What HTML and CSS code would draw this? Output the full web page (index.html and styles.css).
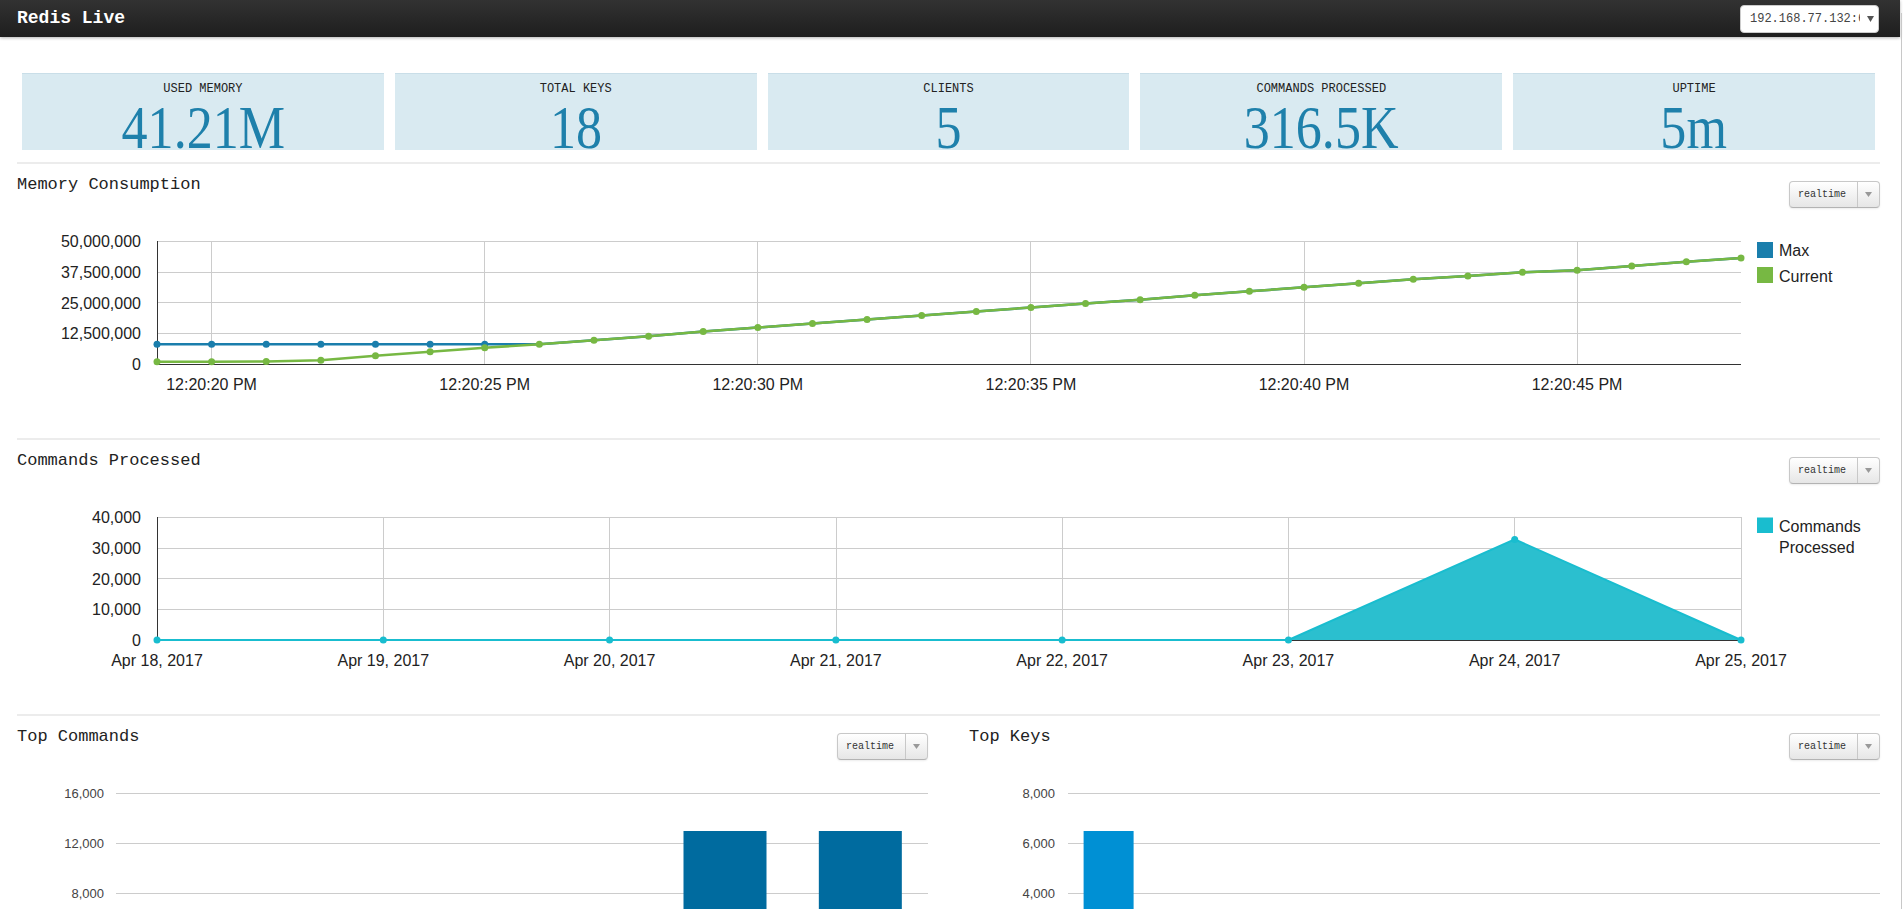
FILE: index.html
```html
<!DOCTYPE html>
<html lang="en">
<head>
<meta charset="utf-8">
<title>Redis Live</title>
<link rel="stylesheet" href="styles.css">
</head>
<body>
<div class="page">
  <header class="navbar">
    <div class="brand">Redis Live</div>
    <div class="server-select">
      <span class="server-text">192.168.77.132:6379</span>
      <svg class="select-caret" width="7" height="6" viewBox="0 0 7 6"><path d="M0 0H7L3.5 6Z"/></svg>
    </div>
  </header>

  <main class="container">
    <div class="stats">
      <div class="stat"><div class="stat-label">USED MEMORY</div><div class="stat-value"><span>41.21M</span></div></div>
      <div class="stat"><div class="stat-label">TOTAL KEYS</div><div class="stat-value"><span>18</span></div></div>
      <div class="stat"><div class="stat-label">CLIENTS</div><div class="stat-value"><span>5</span></div></div>
      <div class="stat"><div class="stat-label">COMMANDS PROCESSED</div><div class="stat-value"><span>316.5K</span></div></div>
      <div class="stat"><div class="stat-label">UPTIME</div><div class="stat-value"><span>5m</span></div></div>
    </div>

    <section class="panel">
      <div class="panel-head">
        <h2 class="panel-title">Memory Consumption</h2>
        <div class="btn-group"><span class="btn">realtime</span><span class="btn-caret"><svg width="7" height="5" viewBox="0 0 7 5"><path d="M0 0H7L3.5 5Z"/></svg></span></div>
      </div>
      <svg class="chart" width="1863" height="230" viewBox="0 0 1863 230">
        <g class="grid">
          <line x1="140" y1="33.5" x2="1724" y2="33.5"/>
          <line x1="140" y1="64.5" x2="1724" y2="64.5"/>
          <line x1="140" y1="94.5" x2="1724" y2="94.5"/>
          <line x1="140" y1="125.5" x2="1724" y2="125.5"/>
          <line x1="194.5" y1="33" x2="194.5" y2="156"/>
          <line x1="467.5" y1="33" x2="467.5" y2="156"/>
          <line x1="740.5" y1="33" x2="740.5" y2="156"/>
          <line x1="1013.5" y1="33" x2="1013.5" y2="156"/>
          <line x1="1287.5" y1="33" x2="1287.5" y2="156"/>
          <line x1="1560.5" y1="33" x2="1560.5" y2="156"/>
        </g>
        <g class="axis-line">
          <line x1="140.5" y1="33" x2="140.5" y2="157"/>
          <line x1="140" y1="156.5" x2="1724" y2="156.5"/>
        </g>
        <g class="axis-label y-labels">
          <text x="124" y="39">50,000,000</text>
          <text x="124" y="70">37,500,000</text>
          <text x="124" y="100.5">25,000,000</text>
          <text x="124" y="131">12,500,000</text>
          <text x="124" y="162">0</text>
        </g>
        <g class="axis-label x-labels">
          <text x="194.6" y="182">12:20:20 PM</text>
          <text x="467.7" y="182">12:20:25 PM</text>
          <text x="740.8" y="182">12:20:30 PM</text>
          <text x="1013.9" y="182">12:20:35 PM</text>
          <text x="1287" y="182">12:20:40 PM</text>
          <text x="1560.1" y="182">12:20:45 PM</text>
        </g>
        <polyline class="line-max" points="140,136.3 194.62,136.3 249.24,136.3 303.86,136.3 358.48,136.3 413.1,136.3 467.72,136.3 522.34,136.3 576.96,132.3 631.58,128.3 686.2,123.5 740.82,119.5 795.44,115.4 850.06,111.5 904.68,107.5 959.3,103.5 1013.92,99.5 1068.54,95.5 1123.16,91.7 1177.78,87.3 1232.4,83.3 1287.02,79.3 1341.64,75.3 1396.26,71.3 1450.88,68 1505.5,64.3 1560.12,62.3 1614.74,58 1669.36,53.7 1724,50"/>
        <g class="dots-max">
          <circle cx="140" cy="136.3" r="3.5"/><circle cx="194.62" cy="136.3" r="3.5"/><circle cx="249.24" cy="136.3" r="3.5"/><circle cx="303.86" cy="136.3" r="3.5"/><circle cx="358.48" cy="136.3" r="3.5"/><circle cx="413.1" cy="136.3" r="3.5"/><circle cx="467.72" cy="136.3" r="3.5"/>
        </g>
        <polyline class="line-cur" points="140,153.7 194.62,153.7 249.24,153.5 303.86,152.3 358.48,147.7 413.1,143.7 467.72,139.7 522.34,136.3 576.96,132.3 631.58,128.3 686.2,123.5 740.82,119.5 795.44,115.4 850.06,111.5 904.68,107.5 959.3,103.5 1013.92,99.5 1068.54,95.5 1123.16,91.7 1177.78,87.3 1232.4,83.3 1287.02,79.3 1341.64,75.3 1396.26,71.3 1450.88,68 1505.5,64.3 1560.12,62.3 1614.74,58 1669.36,53.7 1724,50"/>
        <g class="dots-cur">
          <circle cx="140" cy="153.7" r="3.5"/><circle cx="194.62" cy="153.7" r="3.5"/><circle cx="249.24" cy="153.5" r="3.5"/><circle cx="303.86" cy="152.3" r="3.5"/><circle cx="358.48" cy="147.7" r="3.5"/><circle cx="413.1" cy="143.7" r="3.5"/><circle cx="467.72" cy="139.7" r="3.5"/><circle cx="522.34" cy="136.3" r="3.5"/><circle cx="576.96" cy="132.3" r="3.5"/><circle cx="631.58" cy="128.3" r="3.5"/><circle cx="686.2" cy="123.5" r="3.5"/><circle cx="740.82" cy="119.5" r="3.5"/><circle cx="795.44" cy="115.4" r="3.5"/><circle cx="850.06" cy="111.5" r="3.5"/><circle cx="904.68" cy="107.5" r="3.5"/><circle cx="959.3" cy="103.5" r="3.5"/><circle cx="1013.92" cy="99.5" r="3.5"/><circle cx="1068.54" cy="95.5" r="3.5"/><circle cx="1123.16" cy="91.7" r="3.5"/><circle cx="1177.78" cy="87.3" r="3.5"/><circle cx="1232.4" cy="83.3" r="3.5"/><circle cx="1287.02" cy="79.3" r="3.5"/><circle cx="1341.64" cy="75.3" r="3.5"/><circle cx="1396.26" cy="71.3" r="3.5"/><circle cx="1450.88" cy="68" r="3.5"/><circle cx="1505.5" cy="64.3" r="3.5"/><circle cx="1560.12" cy="62.3" r="3.5"/><circle cx="1614.74" cy="58" r="3.5"/><circle cx="1669.36" cy="53.7" r="3.5"/><circle cx="1724" cy="50" r="3.5"/>
        </g>
        <rect class="sw-max" x="1740" y="34" width="16" height="16"/>
        <text class="legend" x="1762" y="48">Max</text>
        <rect class="sw-cur" x="1740" y="59" width="16" height="16"/>
        <text class="legend" x="1762" y="74">Current</text>
      </svg>
    </section>

    <section class="panel">
      <div class="panel-head">
        <h2 class="panel-title">Commands Processed</h2>
        <div class="btn-group"><span class="btn">realtime</span><span class="btn-caret"><svg width="7" height="5" viewBox="0 0 7 5"><path d="M0 0H7L3.5 5Z"/></svg></span></div>
      </div>
      <svg class="chart" width="1863" height="230" viewBox="0 0 1863 230">
        <g class="grid">
          <line x1="140" y1="33.5" x2="1724" y2="33.5"/>
          <line x1="140" y1="64.5" x2="1724" y2="64.5"/>
          <line x1="140" y1="94.5" x2="1724" y2="94.5"/>
          <line x1="140" y1="125.5" x2="1724" y2="125.5"/>
          <line x1="366.5" y1="33" x2="366.5" y2="156"/>
          <line x1="592.5" y1="33" x2="592.5" y2="156"/>
          <line x1="819.5" y1="33" x2="819.5" y2="156"/>
          <line x1="1045.5" y1="33" x2="1045.5" y2="156"/>
          <line x1="1271.5" y1="33" x2="1271.5" y2="156"/>
          <line x1="1497.5" y1="33" x2="1497.5" y2="156"/>
          <line x1="1724.5" y1="33" x2="1724.5" y2="156"/>
        </g>
        <g class="axis-line">
          <line x1="140.5" y1="33" x2="140.5" y2="157"/>
          <line x1="140" y1="156.5" x2="1724" y2="156.5"/>
        </g>
        <g class="axis-label y-labels">
          <text x="124" y="39">40,000</text>
          <text x="124" y="70">30,000</text>
          <text x="124" y="100.5">20,000</text>
          <text x="124" y="131">10,000</text>
          <text x="124" y="162">0</text>
        </g>
        <g class="axis-label x-labels">
          <text x="140" y="182">Apr 18, 2017</text>
          <text x="366.29" y="182">Apr 19, 2017</text>
          <text x="592.57" y="182">Apr 20, 2017</text>
          <text x="818.86" y="182">Apr 21, 2017</text>
          <text x="1045.14" y="182">Apr 22, 2017</text>
          <text x="1271.43" y="182">Apr 23, 2017</text>
          <text x="1497.71" y="182">Apr 24, 2017</text>
          <text x="1724" y="182">Apr 25, 2017</text>
        </g>
        <polygon class="area-cmd" points="1271.43,156 1497.71,55.4 1724,156"/>
        <polyline class="line-cmd" points="140,156 1271.43,156 1497.71,55.4 1724,156"/>
        <g class="dots-cmd">
          <circle cx="140" cy="156" r="3.5"/><circle cx="366.29" cy="156" r="3.5"/><circle cx="592.57" cy="156" r="3.5"/><circle cx="818.86" cy="156" r="3.5"/><circle cx="1045.14" cy="156" r="3.5"/><circle cx="1271.43" cy="156" r="3.5"/><circle cx="1497.71" cy="55.4" r="3.5"/><circle cx="1724" cy="156" r="3.5"/>
        </g>
        <rect class="sw-cmd" x="1740" y="33.5" width="16" height="15.5"/>
        <text class="legend" x="1762" y="48">Commands</text>
        <text class="legend" x="1762" y="68.5">Processed</text>
      </svg>
    </section>

    <div class="split">
      <section class="panel half">
        <div class="panel-head">
          <h2 class="panel-title">Top Commands</h2>
          <div class="btn-group"><span class="btn">realtime</span><span class="btn-caret"><svg width="7" height="5" viewBox="0 0 7 5"><path d="M0 0H7L3.5 5Z"/></svg></span></div>
        </div>
        <svg class="chart" width="911" height="240" viewBox="0 0 911 240">
          <g class="grid">
            <line x1="99" y1="33.5" x2="911" y2="33.5"/>
            <line x1="99" y1="83.5" x2="911" y2="83.5"/>
            <line x1="99" y1="133.5" x2="911" y2="133.5"/>
            <line x1="99" y1="183.5" x2="911" y2="183.5"/>
          </g>
          <g class="axis-label-sm">
            <text x="87" y="38">16,000</text>
            <text x="87" y="88">12,000</text>
            <text x="87" y="138">8,000</text>
            <text x="87" y="188">4,000</text>
            <text x="87" y="238">0</text>
          </g>
          <g class="bars-cmd">
            <rect x="125.17" y="193" width="83" height="40"/>
            <rect x="260.5" y="197" width="83" height="36"/>
            <rect x="395.83" y="201" width="83" height="32"/>
            <rect x="531.17" y="206" width="83" height="27"/>
            <rect x="666.5" y="71" width="83" height="162"/>
            <rect x="801.83" y="71" width="83" height="162"/>
          </g>
          <line class="axis-line-el" x1="99" y1="233.5" x2="911" y2="233.5"/>
        </svg>
      </section>
      <section class="panel half">
        <div class="panel-head">
          <h2 class="panel-title">Top Keys</h2>
          <div class="btn-group"><span class="btn">realtime</span><span class="btn-caret"><svg width="7" height="5" viewBox="0 0 7 5"><path d="M0 0H7L3.5 5Z"/></svg></span></div>
        </div>
        <svg class="chart" width="911" height="240" viewBox="0 0 911 240">
          <g class="grid">
            <line x1="99" y1="33.5" x2="911" y2="33.5"/>
            <line x1="99" y1="83.5" x2="911" y2="83.5"/>
            <line x1="99" y1="133.5" x2="911" y2="133.5"/>
            <line x1="99" y1="183.5" x2="911" y2="183.5"/>
          </g>
          <g class="axis-label-sm">
            <text x="86" y="38">8,000</text>
            <text x="86" y="88">6,000</text>
            <text x="86" y="138">4,000</text>
            <text x="86" y="188">2,000</text>
            <text x="86" y="238">0</text>
          </g>
          <g class="bars-key">
            <rect x="114.6" y="71" width="50" height="162"/>
            <rect x="195.8" y="170" width="50" height="63"/>
            <rect x="277" y="180" width="50" height="53"/>
            <rect x="358.2" y="190" width="50" height="43"/>
            <rect x="439.4" y="200" width="50" height="33"/>
            <rect x="520.6" y="205" width="50" height="28"/>
            <rect x="601.8" y="210" width="50" height="23"/>
            <rect x="683" y="214" width="50" height="19"/>
            <rect x="764.2" y="218" width="50" height="15"/>
            <rect x="845.4" y="221" width="50" height="12"/>
          </g>
          <line class="axis-line-el" x1="99" y1="233.5" x2="911" y2="233.5"/>
        </svg>
      </section>
    </div>
  </main>
</div>
<div class="scroll-edge"></div>
</body>
</html>
```

FILE: styles.css
```css
* { box-sizing: border-box; }

html, body {
  margin: 0;
  padding: 0;
  background: #fff;
}

body {
  font-family: "Liberation Sans", Arial, sans-serif;
  color: #222;
}

.page {
  width: 1900px;
}

/* ---------- navbar ---------- */
.navbar {
  height: 37px;
  display: flex;
  justify-content: space-between;
  align-items: flex-start;
  padding: 0 21px 0 17px;
  background: linear-gradient(to bottom, #323232, #1e1e1e);
  box-shadow: 0 1px 3px rgba(0, 0, 0, 0.3);
}

.brand {
  font: bold 18px/37px "Liberation Mono", monospace;
  color: #fff;
}

.server-select {
  margin-top: 5px;
  width: 139px;
  height: 28px;
  display: flex;
  align-items: center;
  padding-left: 9px;
  background: #fff;
  border: 1px solid #ccc;
  border-radius: 4px;
}

.server-text {
  width: 110px;
  overflow: hidden;
  white-space: nowrap;
  font: 12px/26px "Liberation Mono", monospace;
  color: #444;
}

.select-caret {
  margin-left: 7px;
  fill: #555;
}

/* ---------- layout ---------- */
.container {
  width: 1863px;
  margin-left: 17px;
}

.stats {
  display: grid;
  grid-template-columns: repeat(5, 1fr);
  gap: 11px;
  padding: 0 5px;
  margin-top: 36px;
}

.stat {
  height: 77px;
  padding-top: 7.5px;
  text-align: center;
  background: #d9eaf1;
  border-top: 1px solid #c9dee8;
}

.stat-label {
  font: 12px/14px "Liberation Mono", monospace;
  color: #222;
}

.stat-value {
  margin-top: 7px;
  font: 62px/48px "Liberation Serif", serif;
  color: #1e80ab;
}

.stat-value span {
  display: inline-block;
  transform: scaleX(0.84);
}

.panel {
  border-top: 2px solid #ececec;
}

.stats + .panel {
  margin-top: 12px;
}

.panel-head {
  display: flex;
  justify-content: space-between;
  align-items: flex-start;
  height: 44px;
}

.panel-title {
  margin: 11px 0 0;
  font: normal 17px/20px "Liberation Mono", monospace;
  color: #222;
}

.btn-group {
  margin-top: 17px;
  width: 91px;
  height: 27px;
  display: flex;
  border: 1px solid #c8c8c8;
  border-bottom-color: #b3b3b3;
  border-radius: 4px;
  background: linear-gradient(to bottom, #ffffff, #e6e6e6);
  box-shadow: 0 1px 2px rgba(0, 0, 0, 0.08);
}

.btn {
  width: 67px;
  padding-left: 8px;
  font: 10px/25px "Liberation Mono", monospace;
  color: #333;
  white-space: nowrap;
}

.btn-caret {
  flex: 1;
  display: flex;
  align-items: center;
  justify-content: center;
  border-left: 1px solid #c8c8c8;
  fill: #999;
}

.chart {
  display: block;
}

.split {
  display: grid;
  grid-template-columns: 1fr 1fr;
  gap: 41px;
  border-top: 2px solid #ececec;
}

.split .panel {
  border-top: 0;
}

/* ---------- svg chart styling ---------- */
.grid line {
  stroke: #cccccc;
  stroke-width: 1;
}

.axis-line line,
.axis-line-el {
  stroke: #333333;
  stroke-width: 1;
}

.axis-label text {
  font-family: "Liberation Sans", Arial, sans-serif;
  font-size: 16px;
  fill: #222;
}

.y-labels text {
  text-anchor: end;
}

.x-labels text {
  text-anchor: middle;
}

.axis-label-sm text {
  font-family: "Liberation Sans", Arial, sans-serif;
  font-size: 13px;
  fill: #444;
  text-anchor: end;
}

.legend {
  font-family: "Liberation Sans", Arial, sans-serif;
  font-size: 16px;
  fill: #222;
}

.line-max {
  fill: none;
  stroke: #1a7eac;
  stroke-width: 2.5;
}

.dots-max circle,
.sw-max {
  fill: #1a7eac;
}

.line-cur {
  fill: none;
  stroke: #77b843;
  stroke-width: 2.5;
}

.dots-cur circle,
.sw-cur {
  fill: #77b843;
}

.area-cmd {
  fill: #2bbfcf;
}

.line-cmd {
  fill: none;
  stroke: #19bdcf;
  stroke-width: 2;
}

.dots-cmd circle,
.sw-cmd {
  fill: #19bdcf;
}

.bars-cmd rect {
  fill: #006b9f;
}

.bars-key rect {
  fill: #0090d4;
}

.scroll-edge {
  position: fixed;
  top: 13px;
  right: 2px;
  bottom: 0;
  width: 1px;
  background: #c8c8c8;
}
```
